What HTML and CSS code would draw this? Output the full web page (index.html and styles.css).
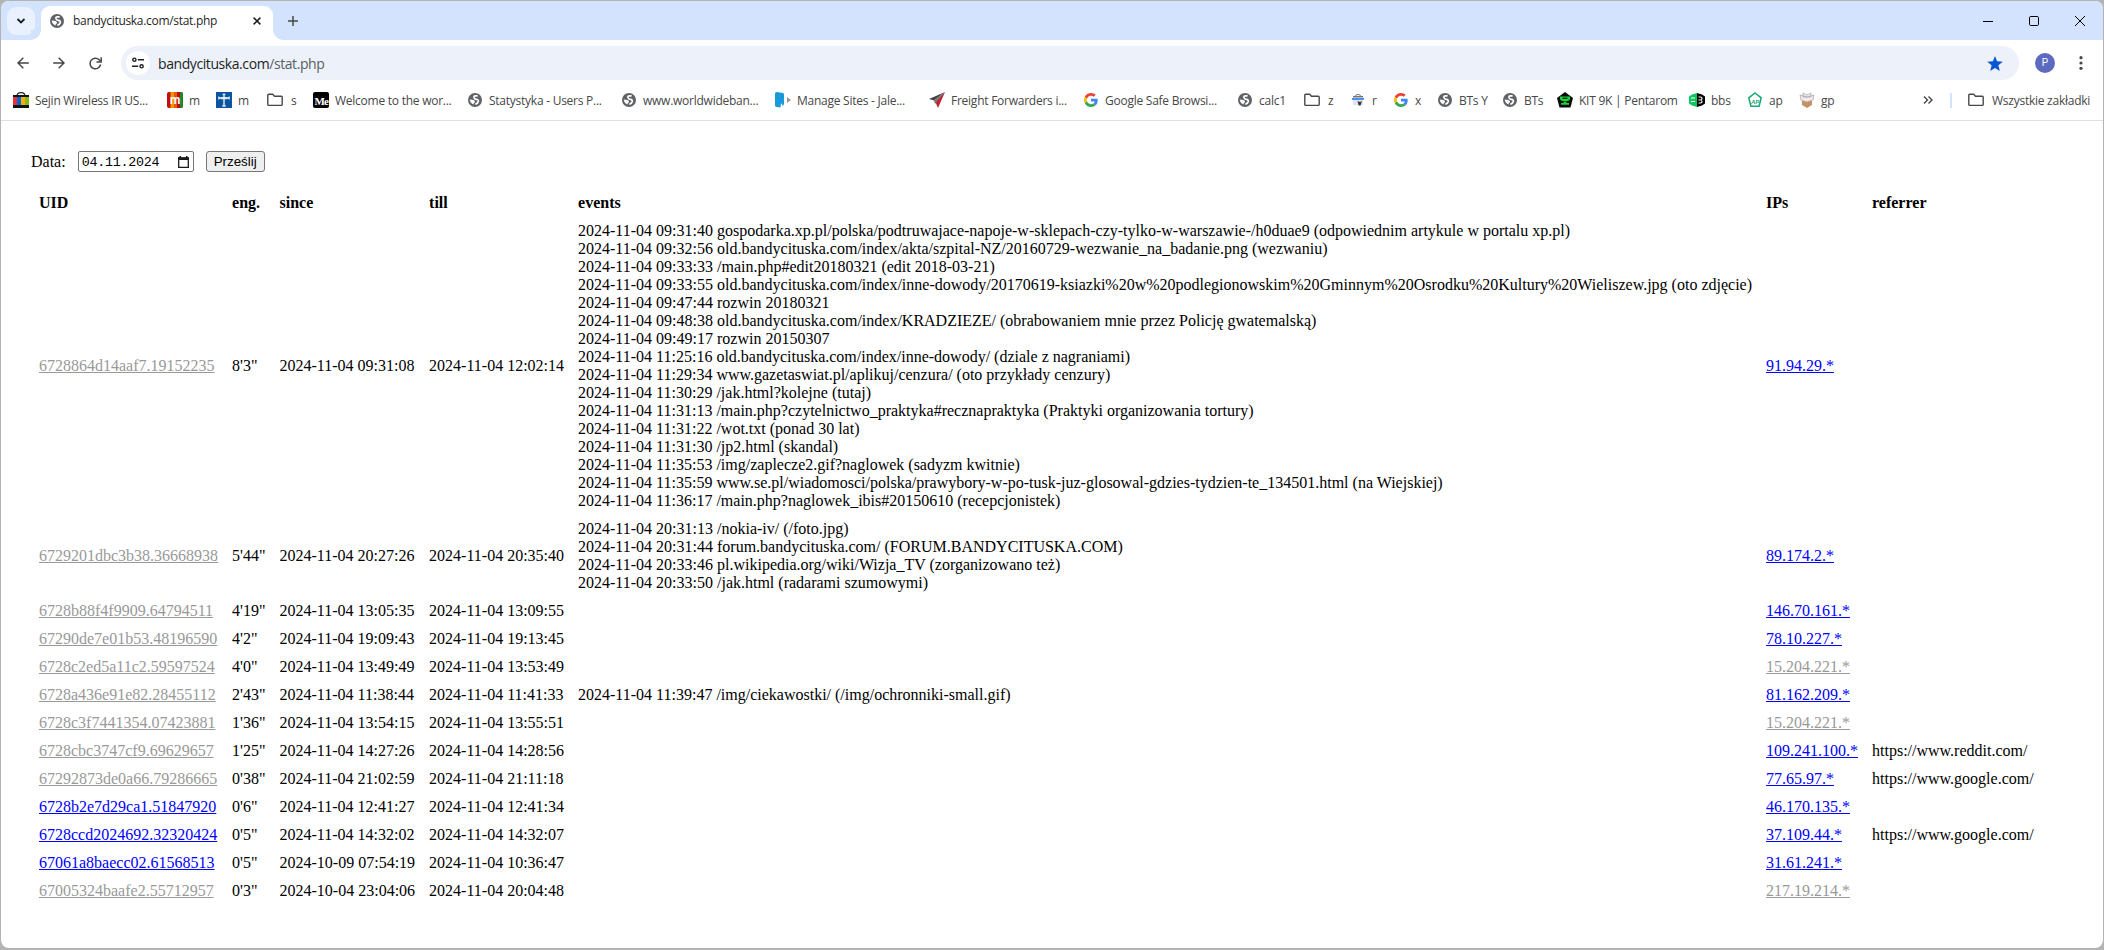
FILE: index.html
```html
<!DOCTYPE html>
<html lang="pl">
<head>
    <meta charset="UTF-8">
    <title>bandycituska.com/stat.php</title>
    <link rel="stylesheet" href="styles.css">
</head>
<body>
    <svg class="defs">
        <symbol id="globe" viewBox="0 0 14 14"><circle cx="7" cy="7" r="7" fill="#5f6368"/><path d="M9.600 2.800H7.300Q5.700 3 6 4.600T8.300 6.300Q10.700 6.500 10.300 8.500T7.300 11.300" fill="none" stroke="#fff" stroke-width="1.700"/><path d="M1.700 6.600l3.900.4 1.500 1.500-.6 1.200-.8.300v1.600Q2.300 10.600 1.700 6.600z" fill="#fff"/></symbol>
        <symbol id="folder" viewBox="0 0 16 16"><path fill="none" stroke="#474747" stroke-width="1.4" stroke-linejoin="round" d="M.8 3.2q0-.9.9-.9h4l1.8 1.9h6.8q.9 0 .9.9v7.4q0 .9-.9.9H1.7q-.9 0-.9-.9z"/></symbol>
        <symbol id="google" viewBox="0 0 48 48">
            <path fill="#ea4335" d="M24 9.5c3.54 0 6.71 1.22 9.21 3.6l6.85-6.85C35.9 2.38 30.47 0 24 0 14.62 0 6.51 5.38 2.56 13.22l7.98 6.19C12.43 13.72 17.74 9.5 24 9.5z"/>
            <path fill="#4285f4" d="M46.98 24.55c0-1.57-.15-3.09-.38-4.55H24v9.02h12.94c-.58 2.96-2.26 5.48-4.78 7.18l7.73 6c4.51-4.18 7.09-10.36 7.09-17.65z"/>
            <path fill="#fbbc05" d="M10.53 28.59c-.48-1.45-.76-2.99-.76-4.59s.27-3.14.76-4.59l-7.98-6.19C.92 16.46 0 20.12 0 24c0 3.88.92 7.54 2.56 10.78l7.97-6.19z"/>
            <path fill="#34a853" d="M24 48c6.48 0 11.93-2.13 15.89-5.81l-7.73-6c-2.15 1.45-4.92 2.3-8.16 2.3-6.26 0-11.57-4.22-13.47-9.91l-7.98 6.19C6.51 42.62 14.62 48 24 48z"/>
        </symbol>
    </svg>

    <div class="window">
        <div class="tabstrip">
            <div class="tab-search"><svg width="10" height="6" viewBox="0 0 10 6"><path d="M1.5 1l3.5 3.5L8.500 1" fill="none" stroke="#1f1f1f" stroke-width="1.8"/></svg></div>
            <div class="tab">
                <svg width="14" height="14"><use href="#globe"/></svg>
                <span class="tab-title">bandycituska.com/stat.php</span>
                <svg class="tab-close" width="8" height="8" viewBox="0 0 8 8"><path d="M.6.6l6.800 6.800M7.400.6L.6 7.400" stroke="#1f1f1f" stroke-width="1.5"/></svg>
            </div>
            <svg class="new-tab" width="10" height="10" viewBox="0 0 10 10"><path d="M5 0v10M0 5h10" stroke="#474747" stroke-width="1.5"/></svg>
            <div class="window-buttons">
                <svg width="10" height="10" viewBox="0 0 10 10"><path d="M0 5.500h10" stroke="#000"/></svg>
                <svg width="10" height="10" viewBox="0 0 10 10"><rect x=".5" y=".5" width="9" height="9" rx="1.200" fill="none" stroke="#000"/></svg>
                <svg width="10" height="10" viewBox="0 0 10 10"><path d="M0 0l10 10M10 0L0 10" stroke="#000"/></svg>
            </div>
        </div>

        <div class="toolbar">
            <svg class="nav" width="12" height="12" viewBox="0 0 12 12"><path d="M11.800 6H1M6.300.7L1 6l5.300 5.300" fill="none" stroke="#474747" stroke-width="1.500"/></svg>
            <svg class="nav" width="12" height="12" viewBox="0 0 12 12"><path d="M.2 6H11M5.700.7L11 6l-5.300 5.300" fill="none" stroke="#474747" stroke-width="1.500"/></svg>
            <svg class="nav" width="13" height="13" viewBox="0 0 13 13"><path d="M11.600 7.500A5.300 5.300 0 1 1 10.300 2.900L11.400 4" fill="none" stroke="#474747" stroke-width="1.500"/><path d="M12.200.3v4.700H7.500" fill="none" stroke="#474747" stroke-width="1.500"/></svg>
            <div class="omnibox">
                <div class="site-info"><svg width="12" height="12" viewBox="0 0 12 12" fill="none" stroke="#1f1f1f" stroke-width="1.400"><circle cx="2.400" cy="2.700" r="1.600"/><path d="M5.800 2.700H12M0 9.300h6.200"/><circle cx="9.600" cy="9.300" r="1.600"/></svg></div>
                <span class="url">bandycituska.com<span class="path">/stat.php</span></span>
                <svg class="star" width="16" height="15" viewBox="0 0 16 15"><path fill="#0b57d0" d="M8 0l2.100 5.300 5.700.4-4.400 3.600 1.400 5.600L8 11.900l-4.800 3 1.400-5.600L.2 5.700l5.700-.4z"/></svg>
            </div>
            <div class="avatar">P</div>
            <svg class="menu" width="4" height="14" viewBox="0 0 4 14" fill="#474747"><circle cx="2" cy="1.700" r="1.600"/><circle cx="2" cy="7" r="1.600"/><circle cx="2" cy="12.300" r="1.600"/></svg>
        </div>

        <div class="bookmarks">
            <div class="bm"><svg viewBox="0 0 16 16"><path d="M4 4q0-3.300 4-3.300T12 4" fill="none" stroke="#222" stroke-width="1.200"/><path d="M0 3h16v13H0z" fill="#111"/><path d="M0 5h4v8H0z" fill="#e53238"/><path d="M4 5h4v8H4z" fill="#0064d2"/><path d="M8 5h4v8H8z" fill="#f5af02"/><path d="M12 5h4v8h-4z" fill="#86b817"/></svg><span>Sejin Wireless IR US...</span></div>
            <div class="bm"><svg viewBox="0 0 16 16"><rect width="16" height="16" rx="2" fill="#c00d0d"/><path d="M3.500 0h4v16h-4z" fill="#f39200"/><path d="M7.500 0H10v16H7.500z" fill="#e8590c"/><path d="M13 0h1q2 0 2 2v12q0 2-2 2h-1z" fill="#198a2d"/><text x="8" y="12" text-anchor="middle" class="m-mark">m</text></svg><span>m</span></div>
            <div class="bm"><svg viewBox="0 0 16 16"><path d="M0 0h16v16H0z" fill="#0b55a0"/><path d="M8 2v12.500M3 6h10" stroke="#fff" stroke-width="1.300"/><path d="M6.500 2.200h3M2.800 4.500v3M13.200 4.500v3M6 14h4M6 5v2.500M10 5v2.500" stroke="#fff"/></svg><span>m</span></div>
            <div class="bm"><svg><use href="#folder"/></svg><span class="folder-name">s</span></div>
            <div class="bm"><svg class="medium" viewBox="0 0 16 16"><rect width="16" height="16" rx="2" fill="#000"/><text x="1.500" y="12.500" class="me-mark">Me</text></svg><span>Welcome to the wor...</span></div>
            <div class="bm"><svg class="small"><use href="#globe"/></svg><span>Statystyka - Users P...</span></div>
            <div class="bm"><svg class="small"><use href="#globe"/></svg><span>www.worldwideban...</span></div>
            <div class="bm"><svg viewBox="0 0 16 16"><path d="M0 1.500Q0 0 2 0l6 1q1 .2 1 1.500V12l-1 2-2-3-.5 4.500-4-.5q-1.500-.3-1.500-1.500z" fill="#189ad8"/><path d="M12 5l4 3-4 3z" fill="#999"/></svg><span>Manage Sites - Jale...</span></div>
            <div class="bm"><svg viewBox="0 0 16 16"><path d="M16 0L0 7l5 1.500z" fill="#444"/><path d="M16 0L6 9l3 7z" fill="#c8202f"/><path d="M16 0L5 8.500 6 12z" fill="#777"/></svg><span>Freight Forwarders i...</span></div>
            <div class="bm"><svg class="small"><use href="#google"/></svg><span>Google Safe Browsi...</span></div>
            <div class="bm"><svg class="small"><use href="#globe"/></svg><span>calc1</span></div>
            <div class="bm"><svg><use href="#folder"/></svg><span class="folder-name">z</span></div>
            <div class="bm"><svg viewBox="0 0 16 16"><path d="M5.500 4q0-1.500 2.500-1.500T10.500 4" fill="none" stroke="#777"/><path d="M3 4h10v1.500H3z" fill="#777"/><path d="M2 6h12v2H2z" fill="#4d90f0"/><path d="M3 8h10v5H3z" fill="#dfe5f0"/><path d="M7.500 9l1.200 4.500h1.800L12 9l-2 1z" fill="#333"/></svg><span>r</span></div>
            <div class="bm"><svg class="small"><use href="#google"/></svg><span>x</span></div>
            <div class="bm"><svg class="small"><use href="#globe"/></svg><span>BTs Y</span></div>
            <div class="bm"><svg class="small"><use href="#globe"/></svg><span>BTs</span></div>
            <div class="bm"><svg viewBox="0 0 16 16"><path d="M8 0l8 6-2.500 9.500h-11L0 6z" fill="#0a0a0a"/><path d="M3 4.500h10v3l-2 1.500H5L3 7.500zM6.500 9.500h3v1.500H12v1.800H4V11h2.500z" fill="#18d33a"/><path d="M5.500 6.200h5" stroke="#000"/></svg><span>KIT 9K | Pentarom</span></div>
            <div class="bm"><svg viewBox="0 0 16 16"><path d="M8 1v14l-5-1.500-3-2v-7l3-2z" fill="#0fc65c"/><path d="M8 1l5 1.500 3 2v7l-3 2L8 15z" fill="#000"/><path d="M2 6h4M2 9.500h4M9.500 5h2q1.500 0 1.500 1.400T11.500 8h-2 2q1.500 0 1.500 1.400T11.500 11h-2" fill="none" stroke="#fff" stroke-width="1.200"/></svg><span>bbs</span></div>
            <div class="bm"><svg viewBox="0 0 16 16"><path d="M8 1l6.200 4.800-2.100 8.500H3.900L1.800 5.800z" fill="none" stroke="#1aa774" stroke-width="1.500"/><text x="8" y="11.500" text-anchor="middle" class="ap-mark">AP</text></svg><span>ap</span></div>
            <div class="bm"><svg viewBox="0 0 16 16"><path d="M3 9h10v4l-5 3-5-3z" fill="#c79263"/><path d="M1 3l7 2 7-2-1 5-6 2-6-2zM4 1l4 2 4-2v4H4z" fill="#f2e9e9" stroke="#aaa0aa" stroke-width=".7"/></svg><span>gp</span></div>
            <div class="bm-right">
                <svg class="more" viewBox="0 0 10 8"><path d="M1 .5L4.500 4 1 7.500M5.500.5L9 4 5.500 7.500" fill="none" stroke="#474747" stroke-width="1.400"/></svg>
                <i class="separator"></i>
                <svg><use href="#folder"/></svg><span class="all-bookmarks">Wszystkie zakładki</span>
            </div>
        </div>

        <div class="page">
            <form class="filter">
                <label>Data:</label>
                <div class="date">04.11.2024<svg width="11" height="12" viewBox="0 0 11 12"><path d="M.7 2h9.600v9.300H.7z" fill="none" stroke="#1a1a1a" stroke-width="1.300"/><path d="M0 1.500h11V4H0zM1.500 0H3v2H1.500zM8 0h1.500v2H8z" fill="#1a1a1a"/></svg></div>
                <button type="button">Prześlij</button>
            </form>

            <table>
                <tr><th>UID</th><th>eng.</th><th>since</th><th>till</th><th>events</th><th>IPs</th><th>referrer</th></tr>
                <tr>
                    <td><a class="seen" href="#">6728864d14aaf7.19152235</a></td><td>8'3"</td><td>2024-11-04 09:31:08</td><td>2024-11-04 12:02:14</td>
                    <td>2024-11-04 09:31:40 gospodarka.xp.pl/polska/podtruwajace-napoje-w-sklepach-czy-tylko-w-warszawie-/h0duae9 (odpowiednim artykule w portalu xp.pl)<br>
                        2024-11-04 09:32:56 old.bandycituska.com/index/akta/szpital-NZ/20160729-wezwanie_na_badanie.png (wezwaniu)<br>
                        2024-11-04 09:33:33 /main.php#edit20180321 (edit 2018-03-21)<br>
                        2024-11-04 09:33:55 old.bandycituska.com/index/inne-dowody/20170619-ksiazki%20w%20podlegionowskim%20Gminnym%20Osrodku%20Kultury%20Wieliszew.jpg (oto zdjęcie)<br>
                        2024-11-04 09:47:44 rozwin 20180321<br>
                        2024-11-04 09:48:38 old.bandycituska.com/index/KRADZIEZE/ (obrabowaniem mnie przez Policję gwatemalską)<br>
                        2024-11-04 09:49:17 rozwin 20150307<br>
                        2024-11-04 11:25:16 old.bandycituska.com/index/inne-dowody/ (dziale z nagraniami)<br>
                        2024-11-04 11:29:34 www.gazetaswiat.pl/aplikuj/cenzura/ (oto przykłady cenzury)<br>
                        2024-11-04 11:30:29 /jak.html?kolejne (tutaj)<br>
                        2024-11-04 11:31:13 /main.php?czytelnictwo_praktyka#recznapraktyka (Praktyki organizowania tortury)<br>
                        2024-11-04 11:31:22 /wot.txt (ponad 30 lat)<br>
                        2024-11-04 11:31:30 /jp2.html (skandal)<br>
                        2024-11-04 11:35:53 /img/zaplecze2.gif?naglowek (sadyzm kwitnie)<br>
                        2024-11-04 11:35:59 www.se.pl/wiadomosci/polska/prawybory-w-po-tusk-juz-glosowal-gdzies-tydzien-te_134501.html (na Wiejskiej)<br>
                        2024-11-04 11:36:17 /main.php?naglowek_ibis#20150610 (recepcjonistek)</td>
                    <td><a href="#">91.94.29.*</a></td><td></td>
                </tr>
                <tr>
                    <td><a class="seen" href="#">6729201dbc3b38.36668938</a></td><td>5'44"</td><td>2024-11-04 20:27:26</td><td>2024-11-04 20:35:40</td>
                    <td>2024-11-04 20:31:13 /nokia-iv/ (/foto.jpg)<br>
                        2024-11-04 20:31:44 forum.bandycituska.com/ (FORUM.BANDYCITUSKA.COM)<br>
                        2024-11-04 20:33:46 pl.wikipedia.org/wiki/Wizja_TV (zorganizowano też)<br>
                        2024-11-04 20:33:50 /jak.html (radarami szumowymi)</td>
                    <td><a href="#">89.174.2.*</a></td><td></td>
                </tr>
                <tr><td><a class="seen" href="#">6728b88f4f9909.64794511</a></td><td>4'19"</td><td>2024-11-04 13:05:35</td><td>2024-11-04 13:09:55</td><td></td><td><a href="#">146.70.161.*</a></td><td></td></tr>
                <tr><td><a class="seen" href="#">67290de7e01b53.48196590</a></td><td>4'2"</td><td>2024-11-04 19:09:43</td><td>2024-11-04 19:13:45</td><td></td><td><a href="#">78.10.227.*</a></td><td></td></tr>
                <tr><td><a class="seen" href="#">6728c2ed5a11c2.59597524</a></td><td>4'0"</td><td>2024-11-04 13:49:49</td><td>2024-11-04 13:53:49</td><td></td><td><a class="seen" href="#">15.204.221.*</a></td><td></td></tr>
                <tr><td><a class="seen" href="#">6728a436e91e82.28455112</a></td><td>2'43"</td><td>2024-11-04 11:38:44</td><td>2024-11-04 11:41:33</td><td>2024-11-04 11:39:47 /img/ciekawostki/ (/img/ochronniki-small.gif)</td><td><a href="#">81.162.209.*</a></td><td></td></tr>
                <tr><td><a class="seen" href="#">6728c3f7441354.07423881</a></td><td>1'36"</td><td>2024-11-04 13:54:15</td><td>2024-11-04 13:55:51</td><td></td><td><a class="seen" href="#">15.204.221.*</a></td><td></td></tr>
                <tr><td><a class="seen" href="#">6728cbc3747cf9.69629657</a></td><td>1'25"</td><td>2024-11-04 14:27:26</td><td>2024-11-04 14:28:56</td><td></td><td><a href="#">109.241.100.*</a></td><td>https://www.reddit.com/</td></tr>
                <tr><td><a class="seen" href="#">67292873de0a66.79286665</a></td><td>0'38"</td><td>2024-11-04 21:02:59</td><td>2024-11-04 21:11:18</td><td></td><td><a href="#">77.65.97.*</a></td><td>https://www.google.com/</td></tr>
                <tr><td><a href="#">6728b2e7d29ca1.51847920</a></td><td>0'6"</td><td>2024-11-04 12:41:27</td><td>2024-11-04 12:41:34</td><td></td><td><a href="#">46.170.135.*</a></td><td></td></tr>
                <tr><td><a href="#">6728ccd2024692.32320424</a></td><td>0'5"</td><td>2024-11-04 14:32:02</td><td>2024-11-04 14:32:07</td><td></td><td><a href="#">37.109.44.*</a></td><td>https://www.google.com/</td></tr>
                <tr><td><a href="#">67061a8baecc02.61568513</a></td><td>0'5"</td><td>2024-10-09 07:54:19</td><td>2024-11-04 10:36:47</td><td></td><td><a href="#">31.61.241.*</a></td><td></td></tr>
                <tr><td><a class="seen" href="#">67005324baafe2.55712957</a></td><td>0'3"</td><td>2024-10-04 23:04:06</td><td>2024-11-04 20:04:48</td><td></td><td><a class="seen" href="#">217.19.214.*</a></td><td></td></tr>
            </table>
        </div>
    </div>
</body>
</html>
```
FILE: styles.css
```css
* {
    box-sizing: border-box;
}
body {
    margin: 0;
    height: 950px;
    overflow: hidden;
    background: #b4b4b4;
    font-family: "Open Sans", "Noto Sans", sans-serif;
}
svg {
    display: block;
    flex: none;
}
.defs {
    position: absolute;
    width: 0;
    height: 0;
}
.window {
    height: 948px;
    margin: 0 1px;
    border-top: 1px solid #b4b4b4;
    border-radius: 8px;
    background: #fff;
    overflow: hidden;
}

/* tab strip */
.tabstrip {
    display: flex;
    align-items: center;
    height: 39px;
    padding-left: 6px;
    background: #d3e3fd;
}
.tab-search {
    display: flex;
    align-items: center;
    justify-content: center;
    width: 28px;
    height: 28px;
    border-radius: 9px;
    background: #e9f1fe;
}
.tab {
    position: relative;
    display: flex;
    align-items: center;
    align-self: flex-end;
    width: 232px;
    height: 34px;
    margin-left: 6px;
    padding: 0 12px 5px 9px;
    border-radius: 9px 9px 0 0;
    background: #fff;
}
/* curved feet of the active tab */
.tab::before,
.tab::after {
    content: "";
    position: absolute;
    bottom: 0;
    width: 10px;
    height: 10px;
}
.tab::before {
    left: -10px;
    background: radial-gradient(circle at 0 0, #d3e3fd 9.5px, #fff 10px);
}
.tab::after {
    right: -10px;
    background: radial-gradient(circle at 100% 0, #d3e3fd 9.5px, #fff 10px);
}
.tab-title {
    margin-left: 9px;
    color: #1f1f1f;
    font-size: 12px;
    letter-spacing: -0.3px;
    white-space: nowrap;
}
.tab-close {
    margin-left: auto;
}
.new-tab {
    margin-left: 15px;
}
.window-buttons {
    display: flex;
    gap: 36px;
    margin-left: auto;
    padding-right: 18px;
}

/* toolbar */
.toolbar {
    display: flex;
    align-items: center;
    height: 46px;
    padding-left: 16px;
}
.nav {
    margin-right: 24px;
}
.nav + .nav + .nav {
    margin-right: 19px;
}
.omnibox {
    display: flex;
    align-items: center;
    flex: 1;
    height: 34px;
    padding: 0 16px 0 5px;
    border-radius: 17px;
    background: #ecf1fa;
}
.site-info {
    display: flex;
    align-items: center;
    justify-content: center;
    width: 24px;
    height: 24px;
    border-radius: 50%;
    background: #fff;
}
.url {
    margin-left: 8px;
    color: #1f1f1f;
    font-size: 14px;
    letter-spacing: -0.42px;
}
.path {
    color: #5a5e63;
}
.star {
    margin-left: auto;
}
.avatar {
    width: 20px;
    height: 20px;
    margin-left: 16px;
    border-radius: 50%;
    background: #5c6bc0;
    color: #fff;
    font: 10px/20px Roboto, sans-serif;
    text-align: center;
}
.menu {
    margin: 0 20px 0 24px;
}

/* bookmarks bar */
.bookmarks {
    display: grid;
    grid-template-columns: 154px 49px 51px 46px repeat(6, 154px) 67px 46px 43px 44px 65px 55px 132px 58px 52px 60px 1fr;
    align-items: center;
    height: 35px;
    padding: 0 13px 6px 12px;
    border-bottom: 1px solid #dedfe1;
    color: #474747;
    font-size: 12px;
    letter-spacing: -0.25px;
    white-space: nowrap;
}
.bm,
.bm-right {
    display: flex;
    align-items: center;
}
.bm svg,
.bm-right svg {
    width: 16px;
    height: 16px;
}
.bm svg.small {
    width: 14px;
    height: 14px;
    margin: 0 1px;
}
.bm span {
    margin-left: 6px;
}
.bm .folder-name {
    margin-left: 8px;
}
.bm-right {
    justify-content: flex-end;
}
.bm-right svg.more {
    width: 10px;
    height: 8px;
}
.separator {
    width: 2px;
    height: 15px;
    margin: 0 16px 0 17px;
    background: #d3e3fd;
}
.all-bookmarks {
    width: 98px;
    margin-left: 8px;
}
.m-mark {
    fill: #fff;
    font: bold 12px "Liberation Sans", sans-serif;
}
.me-mark {
    fill: #fff;
    font: bold 11px "Liberation Serif", serif;
    letter-spacing: -0.8px;
}
.ap-mark {
    fill: #1aa774;
    font: italic bold 6px "Liberation Sans", sans-serif;
}

/* page */
.page {
    padding: 30px 0 0 30px;
    color: #000;
    font: 16px/18px "Liberation Serif", serif;
}
.filter {
    display: flex;
    align-items: center;
    height: 21px;
}
.date {
    display: flex;
    align-items: center;
    justify-content: space-between;
    width: 116px;
    height: 21px;
    margin: 0 12px;
    padding: 1px 4px 0 3px;
    border: 1px solid #767676;
    border-radius: 2px;
    font: 13.33px "Liberation Mono", monospace;
    letter-spacing: -0.25px;
}
.filter button {
    width: 59px;
    height: 21px;
    padding: 0;
    border: 1px solid #767676;
    border-radius: 3px;
    background: #efefef;
    color: #000;
    font: 13.33px "Liberation Sans", sans-serif;
}
table {
    margin: 17px 0 0 1px;
    border-collapse: collapse;
}
th,
td {
    padding: 5px 7px;
    text-align: left;
    vertical-align: middle;
    white-space: nowrap;
}
a {
    color: #00f;
}
a.seen {
    color: #999;
}
```
